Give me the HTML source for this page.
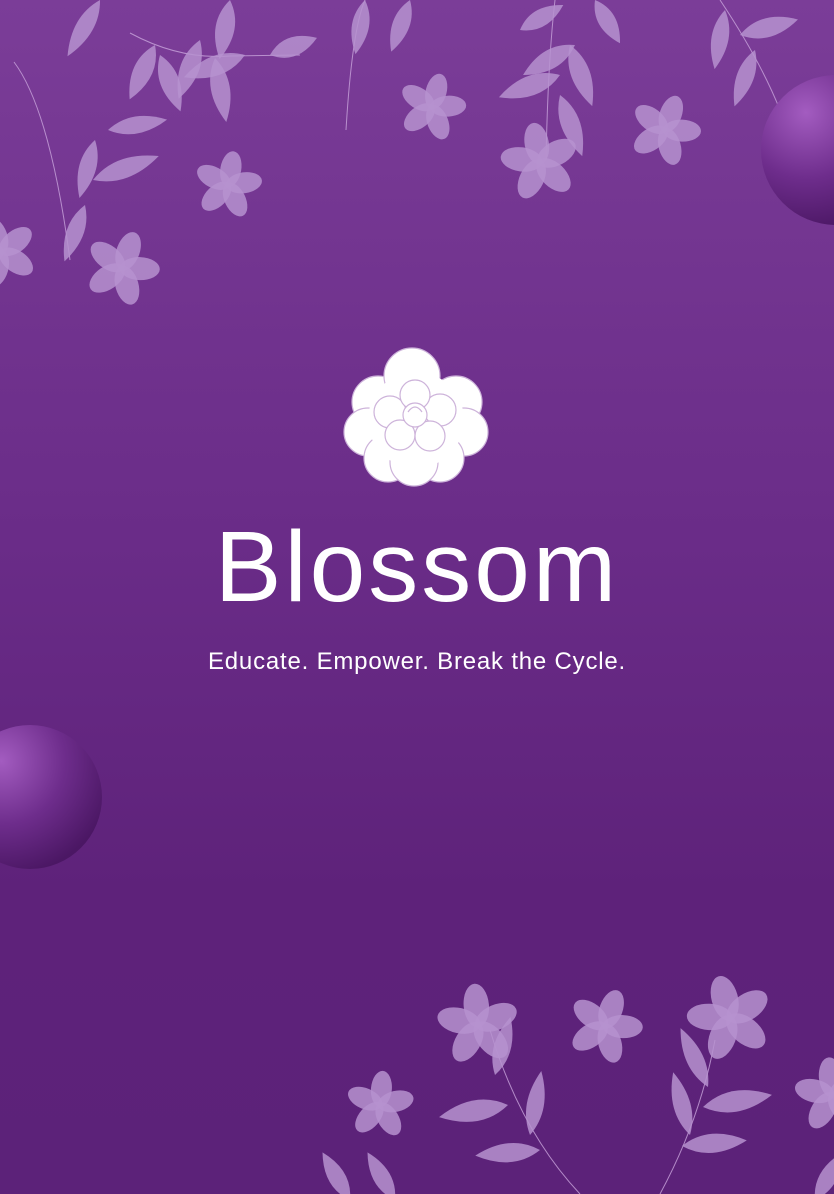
<!DOCTYPE html>
<html><head><meta charset="utf-8"><style>
html,body{margin:0;padding:0}
body{width:834px;height:1194px;overflow:hidden;position:relative;background:linear-gradient(180deg,#7b3d98 0%,#6a2c88 45%,#5e227a 75%,#5c2279 100%);font-family:"Liberation Sans",sans-serif}
svg{position:absolute;left:0;top:0}
.t{position:absolute;left:0;width:834px;text-align:center;color:#fff}
</style></head><body>
<svg width="834" height="1194" viewBox="0 0 834 1194">
<defs>
<g id="f"><g fill="#b692cf" fill-opacity="0.85">
<ellipse cx="0" cy="-17" rx="11" ry="19"/>
<ellipse cx="0" cy="-17" rx="11" ry="19" transform="rotate(72)"/>
<ellipse cx="0" cy="-17" rx="11" ry="19" transform="rotate(144)"/>
<ellipse cx="0" cy="-17" rx="11" ry="19" transform="rotate(216)"/>
<ellipse cx="0" cy="-17" rx="11" ry="19" transform="rotate(288)"/>
</g></g>
<path id="l" d="M0,0 Q19,-22 0,-50 Q-19,-22 0,0Z" fill="#b692cf" fill-opacity="0.85"/>
<radialGradient id="s" cx="0.3" cy="0.25" r="0.8"><stop offset="0" stop-color="#a35cc0"/><stop offset="0.55" stop-color="#6e2d8c"/><stop offset="1" stop-color="#4b1764"/></radialGradient>
</defs>
<g stroke="#c9a5dc" stroke-width="1" fill="none" opacity="0.8">
<path d="M14,62 Q50,110 70,260"/>
<path d="M130,33 Q180,60 230,56 L300,55"/>
<path d="M365,0 Q352,30 346,130"/>
<path d="M555,0 Q548,60 546,160"/>
<path d="M720,0 Q760,60 780,110"/>
<path d="M490,1030 Q520,1130 580,1194"/>
<path d="M715,1040 Q700,1120 660,1194"/>
</g>
<use href="#l" transform="translate(108,130) rotate(80) scale(0.9,1.2)"/>
<use href="#l" transform="translate(95,140) rotate(-165) scale(0.9,1.2)" />
<use href="#l" transform="translate(93,180) rotate(70) scale(1,1.4)"/>
<use href="#l" transform="translate(85,205) rotate(-160) scale(0.9,1.2)"/>
<use href="#l" transform="translate(100,0) rotate(-150) scale(0.9,1.3)" />
<use href="#l" transform="translate(155,45) rotate(-155) scale(1,1.2)"/>
<use href="#l" transform="translate(200,40) rotate(-160) scale(1,1.25)"/>
<use href="#l" transform="translate(160,55) rotate(160) scale(1,1.2)"/>
<use href="#l" transform="translate(215,58) rotate(170) scale(1,1.3)"/>
<use href="#l" transform="translate(245,55) rotate(-110) scale(1.05,1.3)"/>
<use href="#l" transform="translate(270,55) rotate(70) scale(1,1.0)"/>
<use href="#l" transform="translate(230,0) rotate(190) scale(1,1.2)"/>
<use href="#l" transform="translate(365,0) rotate(190) scale(0.9,1.1)"/>
<use href="#l" transform="translate(410,0) rotate(200) scale(0.9,1.1)"/>
<use href="#l" transform="translate(575,45) rotate(-120) scale(1,1.2)"/>
<use href="#l" transform="translate(560,75) rotate(-110) scale(1.05,1.3)"/>
<use href="#l" transform="translate(570,45) rotate(160) scale(1,1.3)"/>
<use href="#l" transform="translate(560,95) rotate(160) scale(1,1.3)"/>
<use href="#l" transform="translate(520,30) rotate(60) scale(0.9,1)"/>
<use href="#l" transform="translate(725,10) rotate(190) scale(0.9,1.2)"/>
<use href="#l" transform="translate(740,35) rotate(75) scale(1,1.2)"/>
<use href="#l" transform="translate(755,50) rotate(200) scale(0.9,1.2)"/>
<use href="#l" transform="translate(595,0) rotate(150) scale(0.9,1)"/>
<use href="#l" transform="translate(495,1075) rotate(15) scale(0.9,1.2)"/>
<use href="#l" transform="translate(508,1105) rotate(-100) scale(1.1,1.4)"/>
<use href="#l" transform="translate(530,1135) rotate(10) scale(0.9,1.3)"/>
<use href="#l" transform="translate(540,1150) rotate(-95) scale(1,1.3)"/>
<use href="#l" transform="translate(708,1087) rotate(-25) scale(0.9,1.3)"/>
<use href="#l" transform="translate(703,1107) rotate(80) scale(1.1,1.4)"/>
<use href="#l" transform="translate(690,1135) rotate(-15) scale(0.9,1.3)"/>
<use href="#l" transform="translate(682,1146) rotate(85) scale(1,1.3)"/>
<use href="#l" transform="translate(350,1200) rotate(-30) scale(0.9,1.1)"/>
<use href="#l" transform="translate(395,1200) rotate(-30) scale(0.9,1.1)"/>
<use href="#l" transform="translate(815,1200) rotate(30) scale(0.9,1.1)"/>
<use href="#f" transform="translate(122,268) rotate(20) scale(1.05)"/>
<use href="#f" transform="translate(228,185) rotate(10) scale(0.95)"/>
<use href="#f" transform="translate(2,252) rotate(-20)"/>
<use href="#f" transform="translate(432,107) rotate(15) scale(0.95)"/>
<use href="#f" transform="translate(540,162) rotate(-10) scale(1.1)"/>
<use href="#f" transform="translate(665,130) rotate(20) scale(1)"/>
<use href="#f" transform="translate(478,1025) rotate(-5) scale(1.15)"/>
<use href="#f" transform="translate(605,1026) rotate(20) scale(1.05)"/>
<use href="#f" transform="translate(730,1018) rotate(-15) scale(1.2)"/>
<use href="#f" transform="translate(380,1105) rotate(5) scale(0.95)"/>
<use href="#f" transform="translate(832,1095) rotate(-5) scale(1.05)"/>
<circle cx="836" cy="150" r="75" fill="url(#s)"/>
<circle cx="30" cy="797" r="72" fill="url(#s)"/>
<g fill="#fff" stroke="#cdb3da" stroke-width="1.2">
<circle cx="378" cy="402" r="26"/><circle cx="456" cy="402" r="26"/>
<circle cx="368" cy="432" r="24"/><circle cx="464" cy="432" r="24"/>
<circle cx="412" cy="376" r="28"/><circle cx="388" cy="458" r="24"/><circle cx="440" cy="458" r="24"/>
<circle cx="414" cy="462" r="24"/>
<circle cx="416" cy="420" r="48" stroke="none"/>
<circle cx="390" cy="412" r="16"/><circle cx="440" cy="410" r="16"/>
<circle cx="400" cy="435" r="15"/><circle cx="430" cy="436" r="15"/>
<circle cx="415" cy="395" r="15"/>
<circle cx="415" cy="415" r="12"/>
<path d="M408,412 Q415,402 422,412" fill="none"/>
</g>
</svg>
<div class="t" style="top:512px;font-size:100px;line-height:110px;letter-spacing:3px">Blossom</div>
<div class="t" style="top:647px;font-size:24px;line-height:30px;letter-spacing:0.8px">Educate. Empower. Break the Cycle.</div>
</body></html>
